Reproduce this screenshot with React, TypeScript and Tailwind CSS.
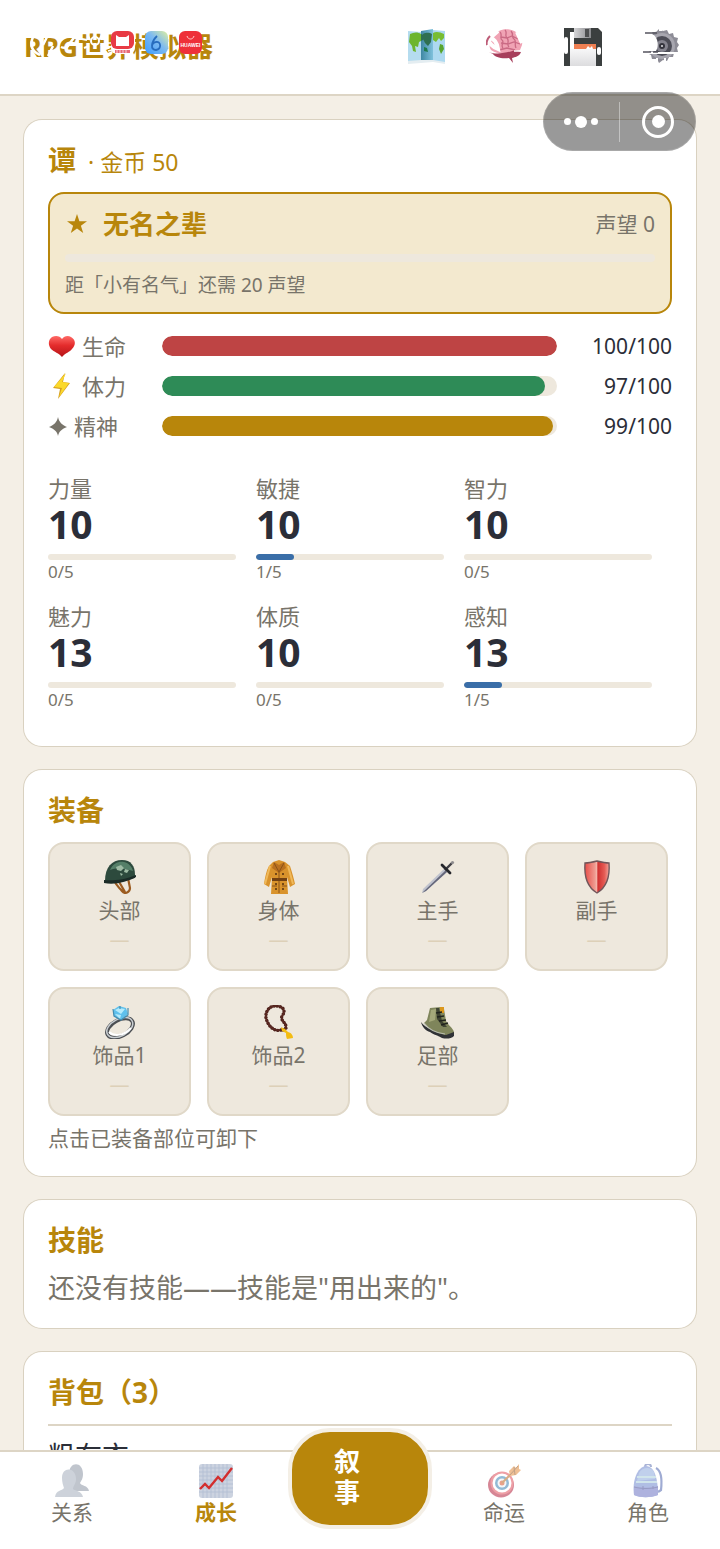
import React from "react";

type IconProps = { className?: string };

const MapIcon = ({ className }: IconProps) => (
  <svg className={className} viewBox="0 0 38 38" aria-hidden="true">
    <defs>
      <linearGradient id="map-mid" x1="0" x2="1">
        <stop offset="0" stopColor="#3f87a3" />
        <stop offset="1" stopColor="#7fc1dc" />
      </linearGradient>
    </defs>
    <path d="M0 3l13 1v29L0 35z" fill="#b5dcef" />
    <path d="M13 3l12-2v32l-12 1z" fill="url(#map-mid)" />
    <path d="M25 2l12 1v32l-12-2z" fill="#add9f0" />
    <path d="M2 6c4-2 8-2 11 0v7l-2 1-1 5-3-1 1 6-3-1-1-5-3-4z" fill="#6db52d" />
    <path d="M13 6l3 1-1 5-2 1zM15 6c4-2 7-1 9 0l-1 8-3 4-3-3-2-4z" fill="#2f6f50" />
    <path d="M25 5c3-2 7-1 11 1v4l-3 3-2-3-3 4-3-2z" fill="#78bd33" />
    <path d="M32 16l3 1 1 4-3 5-2-5z" fill="#58a52e" />
    <path d="M16 19l3 1 1 4-4-1z" fill="#1f7a4c" />
    <path d="M0 33l13-1 12 0 12 2v2l-12-2-12 1-13 1z" fill="#e4edf1" />
  </svg>
);

const BrainIcon = ({ className }: IconProps) => (
  <svg className={className} viewBox="0 0 38 38" aria-hidden="true">
    <path d="M13 3C18 0 27 1 31 5c4 3 6 8 5 12l-2 5c-2 3-6 2-9 3-8 2-16 0-20-3-3-4-1-11 2-14z" fill="#f0a3b4" />
    <path d="M3 24c7 3 18 1 26-2l6 2c-2 5-6 5-9 6l1 5-4-5c-8 1-14-1-16-4z" fill="#a73e5b" />
    <path d="M14 4c3 3-1 6 2 8s-2 5 1 8M19 2c3 3-1 5 2 8s-1 6 2 9M25 3c3 3 0 6 3 8s0 5 2 9M15 9l6 1 5-2 6 3M15 15l7 1 6-2 6 2M13 22l8-2 8 2" fill="none" stroke="#ca6a84" strokeWidth="1.3" />
    <path d="M12 3L4 10c5 1 7 5 8 11-5-2-9-6-10-10M31 4l5 11" fill="none" stroke="#fff" strokeWidth="4" />
    <path d="M4 8c-3 3-4 7-3 9" fill="none" stroke="#bd5c77" strokeWidth="2" />
    <path d="M28 23h8" stroke="#fff" strokeWidth="1.5" />
  </svg>
);

const FloppyIcon = ({ className }: IconProps) => (
  <svg className={className} viewBox="0 0 38 38" aria-hidden="true">
    <defs>
      <linearGradient id="disk-metal" x1="0" x2="1">
        <stop offset="0" stopColor="#d5d5d7" />
        <stop offset="1" stopColor="#87888b" />
      </linearGradient>
      <linearGradient id="disk-label" x1="0" y1="0" x2="0" y2="1">
        <stop offset="0" stopColor="#fff" />
        <stop offset="1" stopColor="#dcdcde" />
      </linearGradient>
    </defs>
    <path d="M0 0h34l4 4v34H0z" fill="#3b3f3f" />
    <path d="M10 0h17v10H10z" fill="url(#disk-metal)" />
    <path d="M21 1h4v8h-4z" fill="#4d4f50" />
    <path d="M6 16h26v22H6z" fill="url(#disk-label)" />
    <path d="M10 16h22v5H10z" fill="#ef7f52" />
    <path d="M6 4h4v17H6z" fill="#fff" />
    <rect x="0" y="9" width="4" height="17" rx="2" fill="#fff" />
    <rect x="33" y="19" width="4" height="8" rx="2" fill="#fff" />
    <path d="M22 21l2-3 2 2 2-2 1 3z" fill="#fff" />
  </svg>
);

const GearIcon = ({ className }: IconProps) => (
  <svg className={className} viewBox="0 0 38 38" aria-hidden="true">
    <path
      d="M10 3l4 1 3-3 4 2 4-1 2 4 4-1 1 4 4 1-1 4 2 3-2 3 1 4-4 1-1 4-4 0-2 4-4-1-4 3-2-4-5 0-1-4-4-2 6-4V8z"
      fill="#8d8c96"
    />
    <circle cx="20" cy="18" r="13" fill="#a7a6af" />
    <circle cx="20" cy="18" r="10" fill="#4d4d57" />
    <circle cx="20" cy="18" r="6" fill="#85848f" />
    <circle cx="20" cy="18" r="3" fill="#34343d" />
    <circle cx="20" cy="18" r="1" fill="#e1e1e6" />
    <path d="M0 7h12c4 4 5 11 2 16H0z" fill="#fff" />
    <path d="M0 25h36" stroke="#fff" strokeWidth="2" />
    <path d="M3 5h12M1 24h8M11 24h5" stroke="#55545f" strokeWidth="1.6" />
    <path d="M10 3h3M17 2h3M15 35v-5M23 36v-6" stroke="#fff" strokeWidth="2" />
  </svg>
);

const HeartIcon = () => (
  <svg className="h-7 w-7" viewBox="0 0 28 28" aria-hidden="true">
    <defs>
      <linearGradient id="heart-fill" x1="0" y1="0" x2="0" y2="1">
        <stop offset="0" stopColor="#ff6a66" />
        <stop offset=".45" stopColor="#e42c2c" />
        <stop offset="1" stopColor="#b51418" />
      </linearGradient>
    </defs>
    <path d="M14 7c2-3 6-4 9-2 5 3 5 8 1 12-2 3-7 4-10 8-3-4-8-5-11-8-3-4-3-9 1-12 4-2 8-1 10 2z" fill="url(#heart-fill)" />
  </svg>
);

const BoltIcon = () => (
  <svg className="h-7 w-7" viewBox="0 0 28 28" aria-hidden="true">
    <path d="M17 1L5 16l7 1-2 10 12-16-7-1z" fill="#d6a020" />
    <path d="M18 1L6 15l8 1-3 9 10-14-7-1z" fill="#fbd92c" />
  </svg>
);

const SparkIcon = () => (
  <svg className="h-5 w-5" viewBox="0 0 20 20" aria-hidden="true">
    <path d="M10 1c1 5 4 8 9 10-5 2-8 4-9 9-1-5-4-7-9-9 5-2 8-5 9-10z" fill="#78746a" />
  </svg>
);

const HelmetIcon = ({ className }: IconProps) => (
  <svg className={className} viewBox="0 0 34 34" aria-hidden="true">
    <path d="M11 20c2 6 5 7 8 11 3 4 8 1 8-3l-2-10M15 20l7 12" fill="none" stroke="#9c5c21" strokeWidth="2.2" />
    <path d="M2 21C2 7 9 0 19 0c9 0 13 6 13 15v3L4 23z" fill="#2d4a3d" />
    <path d="M7 10C10 3 16 1 21 2c5 1 8 5 9 9-7-2-15-4-23-1z" fill="#557f68" />
    <path d="M13 7l5-2 3 3-3 3-4-1zM22 9l4 1-2 3-3-1zM17 13l3 1-2 2z" fill="#9dbaa3" />
    <path d="M1 20c8 1 20 0 32-5v2C24 22 12 25 1 23z" fill="#1b2b27" />
  </svg>
);

const CoatIcon = ({ className }: IconProps) => (
  <svg className={className} viewBox="0 0 34 34" aria-hidden="true">
    <path d="M11 2l6-2 6 2 5 4c2 6 4 13 5 18l-5 3-3-10 1 17H9l1-17-3 10-5-3c1-6 2-13 5-18z" fill="#d9932c" />
    <path d="M8 6L3 24M26 6l5 18" stroke="#f0b95a" strokeWidth="2" />
    <path d="M12 2l5 3 5-3 2 6-7 5-7-5z" fill="#b9701f" />
    <path d="M17 12v21M12 3l5 9 5-9M10 26h5M20 26h5" fill="none" stroke="#8b5318" />
    <path d="M10 18h15v3H10z" fill="#734112" />
    <path d="M13 14h2M20 14h2M13 24h2M20 24h2M13 29h2M20 29h2" stroke="#55310f" strokeWidth="1.5" />
  </svg>
);

const SwordIcon = ({ className }: IconProps) => (
  <svg className={className} viewBox="0 0 34 34" aria-hidden="true">
    <path d="M23 9l3 3L5 31l-4 2 1-4z" fill="#bfc2cd" />
    <path d="M25 10l1 2L5 31l-4 2z" fill="#65677b" />
    <path d="M24 10L31 3" stroke="#403f45" strokeWidth="2.4" />
    <path d="M21 5l8 8" stroke="#25262b" strokeWidth="2.8" strokeLinecap="round" />
    <circle cx="31.5" cy="2.5" r="1.6" fill="#8f8d8f" />
  </svg>
);

const ShieldIcon = ({ className }: IconProps) => (
  <svg className={className} viewBox="0 0 34 34" aria-hidden="true">
    <defs>
      <linearGradient id="shield-fill" x1="0" x2="1">
        <stop offset="0" stopColor="#e84d48" />
        <stop offset=".42" stopColor="#ef9b91" />
        <stop offset=".5" stopColor="#f6bbb0" />
        <stop offset=".53" stopColor="#cf2f30" />
        <stop offset=".8" stopColor="#e55a53" />
        <stop offset="1" stopColor="#f2a59c" />
      </linearGradient>
    </defs>
    <path d="M5 3c4 0 8-1 12-2 4 1 8 2 12 2 1 13-2 24-12 30C7 27 4 16 5 3z" fill="url(#shield-fill)" stroke="#72565a" strokeWidth="1.4" />
  </svg>
);

const RingIcon = ({ className }: IconProps) => (
  <svg className={className} viewBox="0 0 34 34" aria-hidden="true">
    <ellipse cx="17" cy="23" rx="14" ry="8" transform="rotate(-28 17 23)" fill="none" stroke="#4c4f53" strokeWidth="4" />
    <ellipse cx="17" cy="22.5" rx="14" ry="8.5" transform="rotate(-28 17 23)" fill="none" stroke="#c8cdd1" strokeWidth="1.5" />
    <path d="M6 27c4 4 14 5 22-4" fill="none" stroke="#fff" strokeWidth="2" />
    <path d="M10 5l6-4 7 2 2 6-7 6-7-4z" fill="#5fc0ec" />
    <path d="M12 5l4-2 6 1-4 5zM12 9l6 1-1 4z" fill="#b6ebfb" />
    <path d="M10 4l1 7 7 4 7-5V3M17 1v3" fill="none" stroke="#448caf" strokeWidth="1.2" />
  </svg>
);

const BeadsIcon = ({ className }: IconProps) => (
  <svg className={className} viewBox="0 0 34 34" aria-hidden="true">
    <path
      d="M19 25C12 27 6 21 4 13 3 5 9 0 15 1c7 1 9 5 5 10-2 5 5 7 4 12l-3 2"
      fill="none"
      stroke="#4d201b"
      strokeWidth="3.4"
      strokeLinecap="round"
      strokeDasharray="0.1 3"
    />
    <path
      d="M19 25C12 27 6 21 4 13 3 5 9 0 15 1c7 1 9 5 5 10-2 5 5 7 4 12l-3 2"
      fill="none"
      stroke="#5d2a22"
      strokeWidth="1.2"
    />
    <path d="M19 22l4 2 3 3c4 1 5 4 5 6l-6 1c-1-2-1-4-1-6l-4-2z" fill="#f3bc13" />
  </svg>
);

const BootIcon = ({ className }: IconProps) => (
  <svg className={className} viewBox="0 0 34 34" aria-hidden="true">
    <path d="M0 17c5 7 16 11 33 10v4c-3 3-8 3-12 2-5-3-8-3-12-6-4-1-8-5-9-10z" fill="#303236" />
    <path d="M9 3l11-1 3 2 2 12c2 4 7 7 8 11l-8 3C15 28 8 24 3 18l3-3z" fill="#7f855b" />
    <path d="M10 5l5-1-1 11-6 2z" fill="#a4a87a" />
    <path d="M19 2h4v6h-4z" fill="#db971c" />
    <path d="M15 3l3 0 3 13 5 6-4 0-6-8z" fill="#3f4432" />
    <path d="M15 8l6-1M16 12l7-1M18 16l7-1M20 20l7-2" stroke="#20231d" strokeWidth="1.4" />
    <path d="M3 18c5 7 12 10 21 11" fill="none" stroke="#b9bcae" strokeWidth="1.2" />
  </svg>
);

const PeopleIcon = ({ className }: IconProps) => (
  <svg className={className} viewBox="0 0 34 34" aria-hidden="true">
    <path d="M14 10c0-13 14-13 14 0 0 5-2 7-3 9 1 3 8 2 9 8H17z" fill="#8d97a6" />
    <path d="M7 14c0-12 14-11 14 1 0 5-3 7-3 10 2 2 9 2 10 8H0c1-7 7-6 9-9-1-3-2-6-2-10z" fill="#a5afbd" />
  </svg>
);

const ChartIcon = ({ className }: IconProps) => (
  <svg className={className} viewBox="0 0 34 34" aria-hidden="true">
    <rect width="34" height="34" rx="3" fill="#ccd3e0" />
    <path d="M4 0v34M8 0v34M12 0v34M16 0v34M20 0v34M24 0v34M28 0v34M0 4h34M0 8h34M0 12h34M0 16h34M0 20h34M0 24h34M0 28h34" stroke="#b1bed3" strokeWidth=".8" />
    <path d="M1 25l5-5 4 4 9-11 4 4L33 4" fill="none" stroke="#d32e2e" strokeWidth="2.4" />
  </svg>
);

const TargetIcon = ({ className }: IconProps) => (
  <svg className={className} viewBox="0 0 34 34" aria-hidden="true">
    <ellipse cx="14" cy="21" rx="13" ry="12.5" fill="#b62540" />
    <circle cx="15" cy="19" r="11.5" fill="#e1525d" />
    <circle cx="15" cy="19" r="9.5" fill="#fff" />
    <circle cx="15" cy="19" r="7" fill="#3c83b4" />
    <circle cx="15" cy="19" r="4.5" fill="#eef2f5" />
    <circle cx="15" cy="19" r="2.5" fill="#d9552d" />
    <path d="M15 19L27 7" stroke="#b86a20" strokeWidth="2" />
    <path d="M22 7l5-5 2 2 3-4v5l2 1-5 5-6 1z" fill="#e28b3d" />
    <path d="M23 11l8-9M27 3l1 8" stroke="#8e5626" />
  </svg>
);

const BackpackIcon = ({ className }: IconProps) => (
  <svg className={className} viewBox="0 0 34 34" aria-hidden="true">
    <path d="M25 4c6 3 6 13 5 22l-3 2" fill="none" stroke="#5268b0" strokeWidth="2.2" />
    <path d="M14 3c0-4 6-4 6 0" fill="none" stroke="#6578b5" strokeWidth="2" />
    <path d="M3 31C1 17 6 3 15 2c9 0 12 14 12 29-8 3-17 3-24 0z" fill="#7189cf" />
    <path d="M8 9c3-6 12-7 15-1l1 7-18 2z" fill="#8dabdd" />
    <path d="M6 13h19M5 18h21" stroke="#add0dc" strokeWidth="2" />
    <path d="M3 22c8 2 16 2 24 0v9c-8 3-17 3-24 0z" fill="#6d75c4" />
    <path d="M3 23c8 2 16 2 24 0M12 22v4M22 22v3" fill="none" stroke="#424b95" />
  </svg>
);

// system notifications that run over the left part of the header
const StatusOverlay = () => (
  <svg className="pointer-events-none absolute left-6 top-7 h-8 w-48" viewBox="0 0 192 32" aria-hidden="true">
    <defs>
      <linearGradient id="app-six" x1="0" y1="1" x2="1" y2="0">
        <stop offset="0" stopColor="#3c9bff" />
        <stop offset=".55" stopColor="#7fbbf0" />
        <stop offset="1" stopColor="#dff0a0" />
      </linearGradient>
    </defs>
    <g fill="none" stroke="#fff">
      <path d="M9 9c-3 7-2 14 7 18M19 17l5-10M29 18l-5 10" strokeWidth="2.5" />
      <path d="M37 19c4 2 7 0 9-4l6-8" strokeWidth="2.5" />
      <path d="M58 11l5 1M64 8l2 4M78 7l-3 5M60 20l5-2M80 19l-3-2" strokeWidth="2" />
      <circle cx="71" cy="13" r="4" strokeWidth="2" />
      <path d="M84 15h14M84 23l12-3" strokeWidth="1.5" />
    </g>
    <rect x="87" y="3" width="24" height="23" rx="6" fill="#fff" />
    <rect x="87" y="3" width="23" height="18" rx="6" fill="#e83b45" />
    <path d="M92 7l3 2h7l3-2v11H92z" fill="#fff" />
    <path d="M91 22h15v3H91z" fill="#e96a78" />
    <path d="M93 22v3M96 22v3M99 22v3M102 22v3" stroke="#fff" strokeWidth=".7" />
    <rect x="121" y="3" width="23" height="23" rx="6" fill="url(#app-six)" />
    <path d="M133 8c-6 6-7 14-1 14 6-1 5-9 0-8-2 0-4 2-4 4" fill="none" stroke="#286dbe" strokeWidth="1.8" />
    <rect x="155" y="3" width="23" height="23" rx="6" fill="#ee3039" />
    <path d="M163 8c1 4 6 4 7 0" fill="none" stroke="#ffcfd0" />
    <text x="166.5" y="19" textAnchor="middle" fontFamily="Liberation Sans, sans-serif" fontSize="5" fontWeight="700" fill="#fff">
      HUAWEI
    </text>
  </svg>
);

const MiniProgramCapsule = () => (
  <div className="absolute right-6 top-[92px] z-10 flex h-[59px] w-[153px] items-center rounded-full bg-black/40 ring-1 ring-inset ring-white/15">
    <button type="button" aria-label="更多" className="flex flex-1 items-center justify-center gap-1">
      <span className="h-[7px] w-[7px] rounded-full bg-white" />
      <span className="h-3 w-3 rounded-full bg-white" />
      <span className="h-[7px] w-[7px] rounded-full bg-white" />
    </button>
    <span className="h-10 w-px bg-white/40" />
    <button type="button" aria-label="关闭" className="flex flex-1 items-center justify-center">
      <span className="flex h-8 w-8 items-center justify-center rounded-full border-[3px] border-white">
        <span className="h-[13px] w-[13px] rounded-full bg-white" />
      </span>
    </button>
  </div>
);

const tools = [
  { label: "地图", Icon: MapIcon },
  { label: "记忆", Icon: BrainIcon },
  { label: "存档", Icon: FloppyIcon },
  { label: "设置", Icon: GearIcon },
];

const vitals = [
  { label: "生命", value: 100, color: "bg-[#be4444]", Icon: HeartIcon },
  { label: "体力", value: 97, color: "bg-[#2e8b57]", Icon: BoltIcon },
  { label: "精神", value: 99, color: "bg-[#b8860b]", Icon: SparkIcon },
];

const stats = [
  { label: "力量", value: 10, progress: 0 },
  { label: "敏捷", value: 10, progress: 1 },
  { label: "智力", value: 10, progress: 0 },
  { label: "魅力", value: 13, progress: 0 },
  { label: "体质", value: 10, progress: 0 },
  { label: "感知", value: 13, progress: 1 },
];

const slots = [
  { label: "头部", Icon: HelmetIcon },
  { label: "身体", Icon: CoatIcon },
  { label: "主手", Icon: SwordIcon },
  { label: "副手", Icon: ShieldIcon },
  { label: "饰品1", Icon: RingIcon },
  { label: "饰品2", Icon: BeadsIcon },
  { label: "足部", Icon: BootIcon },
];

const Card = ({ children }: { children: React.ReactNode }) => (
  <section className="rounded-[18px] bg-white p-6 ring-1 ring-[#d9d1c0]">{children}</section>
);

const CardTitle = ({ children }: { children: React.ReactNode }) => (
  <h2 className="text-[28px] font-bold leading-8 text-[#b8860b]">{children}</h2>
);

const NavItem = ({ label, Icon, active }: { label: string; Icon: React.FC<IconProps>; active?: boolean }) => (
  <button type="button" className="flex w-1/5 flex-col items-center pt-3">
    <Icon className={active ? "h-[34px] w-[34px]" : "h-[34px] w-[34px] opacity-55"} />
    <span
      className={
        active
          ? "text-[21px] font-bold leading-7 text-[#b8860b]"
          : "text-[21px] leading-7 text-[#78746a]"
      }
    >
      {label}
    </span>
  </button>
);

const App: React.FC = () => {
  return (
    <div
      lang="zh-CN"
      className="relative flex h-screen flex-col overflow-hidden bg-[#f4efe6] font-['Noto_Sans','Noto_Sans_CJK_SC',sans-serif] text-[#2b2e38]"
    >
      <header className="relative flex h-24 shrink-0 items-center justify-between border-b-2 border-[#ddd5c5] bg-white pl-6 pr-10">
        <h1 className="whitespace-nowrap text-[27px] font-bold leading-8 text-[#b8860b]">RPG世界模拟器</h1>
        <StatusOverlay />
        <div className="flex gap-10">
          {tools.map(({ label, Icon }) => (
            <button key={label} type="button" aria-label={label}>
              <Icon className="h-[38px] w-[38px]" />
            </button>
          ))}
        </div>
      </header>
      <MiniProgramCapsule />

      <main className="flex min-h-0 flex-1 flex-col gap-6 overflow-y-auto p-6 [scrollbar-width:none]">
        <Card>
          <div className="flex h-8 items-baseline leading-8 text-[#b8860b]">
            <h2 className="text-[28px] font-bold">谭</h2>
            <span className="ml-3 text-[23px]">· 金币 50</span>
          </div>

          <div className="mt-4 rounded-2xl border-2 border-[#b8860b] bg-[#f3e9cf] px-[15px] py-3">
            <div className="flex h-9 items-center">
              <svg className="h-6 w-6" viewBox="0 0 24 24" aria-hidden="true">
                <path d="M12 2l2.4 7.2H22l-6.1 4.5 2.3 7.3-6.2-4.5L5.8 21l2.3-7.3L2 9.200h7.600z" fill="#b8860b" />
              </svg>
              <strong className="ml-3.5 text-[26px] leading-9 text-[#b8860b]">无名之辈</strong>
              <span className="ml-auto text-[21px] leading-9 text-[#78746a]">声望 0</span>
            </div>
            <div className="mt-3 h-2 rounded-full bg-[#eee8dd]" />
            <p className="mt-2 text-[19px] leading-[30px] text-[#78746a]">距「小有名气」还需 20 声望</p>
          </div>

          <div className="mt-4 flex flex-col gap-2">
            {vitals.map(({ label, value, color, Icon }) => (
              <div key={label} className="flex h-8 items-center">
                <div className="flex w-[114px] items-center gap-1.5 text-[22px] leading-8 text-[#78746a]">
                  <Icon />
                  <span>{label}</span>
                </div>
                <div className="h-5 flex-1 overflow-hidden rounded-full bg-[#eee8dd]">
                  <div className={`h-full rounded-full ${color}`} style={{ width: `${value}%` }} />
                </div>
                <span className="w-[115px] text-right text-[21px] leading-8">{value}/100</span>
              </div>
            ))}
          </div>

          <div className="mt-7.5 grid grid-cols-3 gap-y-4 pb-2.5">
            {stats.map(({ label, value, progress }) => (
              <div key={label} className="pr-5">
                <p className="text-[22px] leading-8 text-[#78746a]">{label}</p>
                <p className="text-[39px] font-bold leading-10">{value}</p>
                <div className="mt-2.5 h-1.5 overflow-hidden rounded-full bg-[#eee8dd]">
                  <div className="h-full rounded-full bg-[#3a6ea8]" style={{ width: `${progress * 20}%` }} />
                </div>
                <p className="text-[17px] leading-6 text-[#78746a]">{progress}/5</p>
              </div>
            ))}
          </div>
        </Card>

        <Card>
          <CardTitle>装备</CardTitle>
          <div className="mt-4 grid grid-cols-4 gap-4 pr-1">
            {slots.map(({ label, Icon }) => (
              <button
                key={label}
                type="button"
                className="flex flex-col items-center rounded-2xl border-2 border-[#e0d8c8] bg-[#eee8dd] pb-[15px] pt-4"
              >
                <Icon className="h-[34px] w-[34px]" />
                <span className="text-[21px] leading-8 text-[#78746a]">{label}</span>
                <span className="text-xl leading-7 text-[#ddd0b8]">—</span>
              </button>
            ))}
          </div>
          <p className="mt-2 text-[21px] leading-7 text-[#78746a]">点击已装备部位可卸下</p>
        </Card>

        <Card>
          <CardTitle>技能</CardTitle>
          <p className="mt-4 text-[27px] leading-8 text-[#78746a]">还没有技能——技能是"用出来的"。</p>
        </Card>

        <Card>
          <CardTitle>背包（3）</CardTitle>
          <ul className="mt-4 border-t-2 border-[#ddd5c5]">
            <li className="py-3.5 text-[27px] leading-8">粗布衣</li>
          </ul>
        </Card>
      </main>

      <nav className="relative flex h-[99px] shrink-0 items-start border-t-2 border-[#ddd5c5] bg-white">
        <NavItem label="关系" Icon={PeopleIcon} />
        <NavItem label="成长" Icon={ChartIcon} active />
        <button
          type="button"
          className="-mt-6 h-[101px] w-1/5 rounded-[42px] border-4 border-[#f4efe6] bg-[#b8860b] pb-1 pl-[42px] text-left text-[26px] font-bold leading-[31px] text-white"
        >
          叙
          <br />
          事
        </button>
        <NavItem label="命运" Icon={TargetIcon} />
        <NavItem label="角色" Icon={BackpackIcon} />
      </nav>
    </div>
  );
};

export default App;
